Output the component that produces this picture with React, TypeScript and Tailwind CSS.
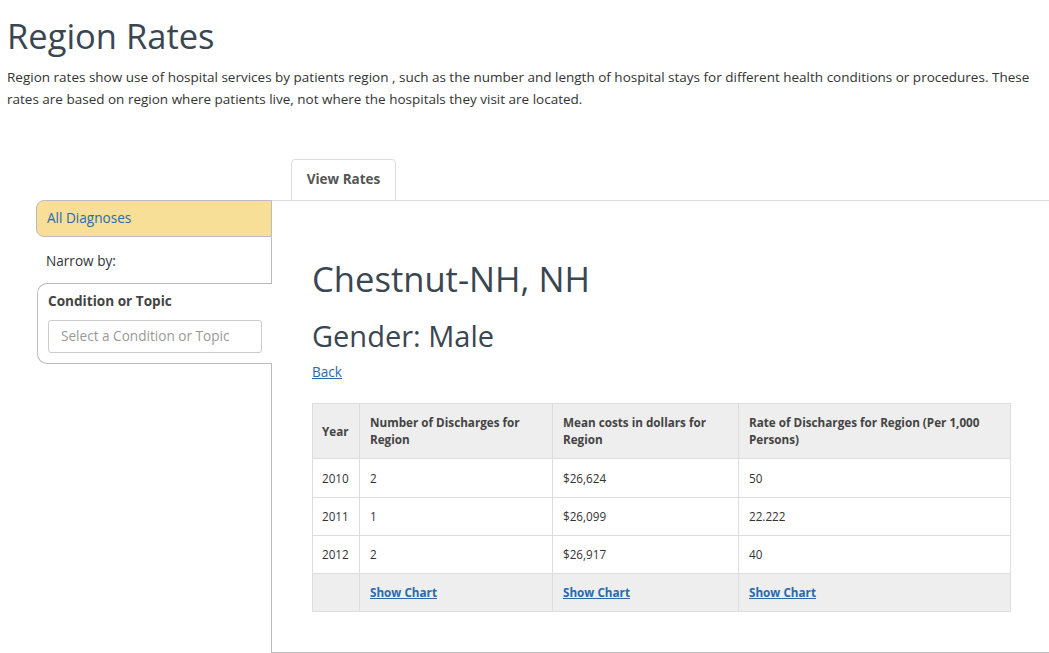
import React from "react";

const rows = [
  ["2010", "2", "$26,624", "50"],
  ["2011", "1", "$26,099", "22.222"],
  ["2012", "2", "$26,917", "40"],
];

export default function App() {
  return (
    <div className="font-['Open_Sans',sans-serif] w-[1049px] h-[653px] overflow-hidden bg-white text-[#333]">
      <div className="px-[7px]">
        <h1 className="pt-[16px] text-[34.5px] leading-[40px] text-[#3a4651] font-normal">Region Rates</h1>
        <p className="mt-[10px] text-[13.5px] leading-[22px] text-[#333]">
          Region rates show use of hospital services by patients region , such as the number and length of hospital stays for different health conditions or procedures. These rates are based on region where patients live, not where the hospitals they visit are located.
        </p>
      </div>

      <div className="mt-[49px] flex">
        <div className="w-[291px] shrink-0" />
        <div className="w-[105px] h-[42px] -mb-px border border-[#ddd] rounded-t-[4px] bg-white flex items-center justify-center pb-[2px] text-[13.5px] font-bold text-[#555]">
          View Rates
        </div>
      </div>

      <div className="flex h-[453px]">
        <div className="w-[272px] shrink-0 flex flex-col pl-[36px]">
          <div className="h-[37px] border border-[#bbb] rounded-l-[8px] bg-[#f8df97] flex items-center pl-[10px] text-[13.6px] text-[#2a69ac]">
            All Diagnoses
          </div>
          <div className="h-[46px] border-r border-[#bbb] flex items-center pl-[10px] pt-[2px] text-[13.6px] text-[#333]">
            Narrow by:
          </div>
          <div className="ml-px h-[81px] border border-r-0 border-[#bbb] rounded-l-[10px] pl-[10px] pt-[7px]">
            <div className="text-[13.6px] leading-[20px] font-bold text-[#444]">Condition or Topic</div>
            <div className="mt-[9px] w-[214px] h-[33px] border border-[#ccc] rounded-[3px] flex items-center pl-[12px] pb-[1px] text-[13.6px] text-[#999]">
              Select a Condition or Topic
            </div>
          </div>
          <div className="flex-1 border-r border-[#bbb]" />
        </div>

        <div className="flex-1 border-t border-[#ddd] border-b border-b-[#bbb] pl-[40px] pt-[58px]">
          <h2 className="text-[34.6px] leading-[40px] text-[#3a4651] font-normal">Chestnut-NH, NH</h2>
          <h3 className="mt-[21px] text-[29px] leading-[32px] text-[#3a4651] font-normal">Gender: Male</h3>
          <div className="mt-[9px] text-[13.6px] leading-[22px]">
            <a className="text-[#2a69ac] underline" href="#">Back</a>
          </div>
          <table className="mt-[20px] w-[698px] table-fixed border-collapse border border-[#ddd] text-[11.7px] leading-[17px]">
            <colgroup>
              <col className="w-[47px]" />
              <col className="w-[193px]" />
              <col className="w-[186px]" />
              <col className="w-[272px]" />
            </colgroup>
            <thead>
              <tr className="bg-[#eee]">
                <th className="border border-[#ddd] px-[9px] py-[10px] text-left font-bold text-[#444] align-middle">Year</th>
                <th className="border border-[#ddd] px-[10px] py-[10px] text-left font-bold text-[#444] align-middle">Number of Discharges for Region</th>
                <th className="border border-[#ddd] px-[10px] py-[10px] text-left font-bold text-[#444] align-middle">Mean costs in dollars for Region</th>
                <th className="border border-[#ddd] px-[10px] py-[10px] text-left font-bold text-[#444] align-middle">Rate of Discharges for Region (Per 1,000 Persons)</th>
              </tr>
            </thead>
            <tbody>
              {rows.map((r, ri) => (
                <tr key={r[0]}>
                  {r.map((c, i) => (
                    <td key={i} className={`border border-[#ddd] ${i === 0 ? "px-[9px]" : "px-[10px]"} py-[10px] ${ri === 0 ? "h-[39px]" : "h-[38px]"} text-[#333]`}>
                      {c}
                    </td>
                  ))}
                </tr>
              ))}
              <tr className="bg-[#eee]">
                <td className="border border-[#ddd] px-[9px] py-[10px] h-[38px]" />
                <td className="border border-[#ddd] px-[10px] py-[10px]">
                  <a href="#" className="font-bold text-[#2a69ac] underline">Show Chart</a>
                </td>
                <td className="border border-[#ddd] px-[10px] py-[10px]">
                  <a href="#" className="font-bold text-[#2a69ac] underline">Show Chart</a>
                </td>
                <td className="border border-[#ddd] px-[10px] py-[10px]">
                  <a href="#" className="font-bold text-[#2a69ac] underline">Show Chart</a>
                </td>
              </tr>
            </tbody>
          </table>
        </div>
      </div>
    </div>
  );
}
